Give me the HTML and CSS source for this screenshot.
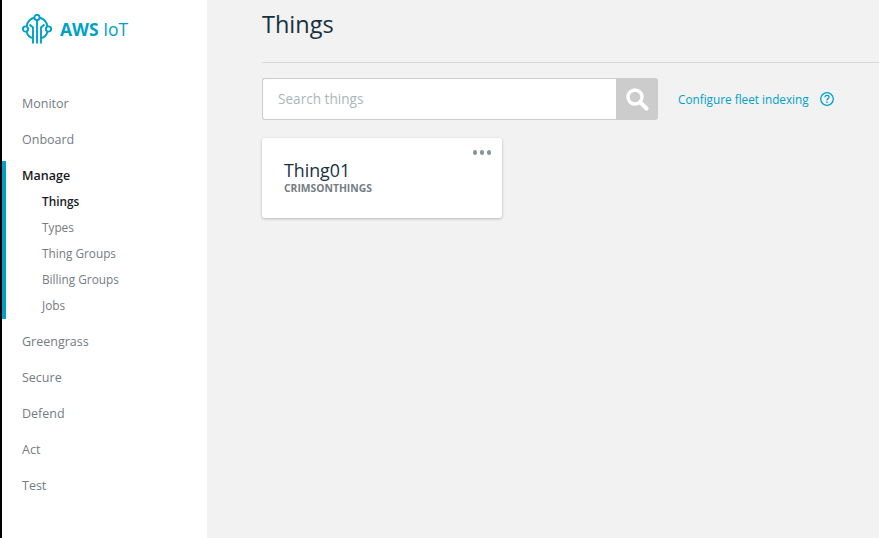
FILE: index.html
```html
<!DOCTYPE html>
<html lang="en">
<head>
  <meta charset="UTF-8" />
  <title>AWS IoT - Things</title>
  <link rel="stylesheet" href="styles.css">
</head>
<body>
  <aside class="sidebar">
    <div class="brand">
      <svg class="brand-icon" viewBox="0 0 30 30" fill="none" stroke="#00a1c9" stroke-width="1.900">
        <circle cx="15" cy="3.500" r="2.600"/>
        <circle cx="3.500" cy="15" r="2.600"/>
        <circle cx="26.500" cy="15" r="2.600"/>
        <path d="M12.500 3.800C8.500 4.500 5.500 7.500 4.500 12.600M17.500 3.800C21.500 4.500 24.500 7.500 25.500 12.600"/>
        <path d="M4.500 17.400C5.500 21.500 8 23.500 11 24M25.500 17.400C24.500 21.500 22 23.500 19 24"/>
        <path d="M15 6V29.500M11 29.500V13.500L7.500 10.500M19 29.500V13.500L22.500 10.500"/>
      </svg>
      <span class="brand-name"><b>AWS</b> IoT</span>
    </div>
    <nav class="nav">
      <a class="nav-item">Monitor</a>
      <a class="nav-item">Onboard</a>
      <div class="nav-group">
        <a class="nav-item active">Manage</a>
        <a class="nav-sub current">Things</a>
        <a class="nav-sub">Types</a>
        <a class="nav-sub">Thing Groups</a>
        <a class="nav-sub">Billing Groups</a>
        <a class="nav-sub">Jobs</a>
      </div>
      <a class="nav-item">Greengrass</a>
      <a class="nav-item">Secure</a>
      <a class="nav-item">Defend</a>
      <a class="nav-item">Act</a>
      <a class="nav-item">Test</a>
    </nav>
  </aside>
  <main class="content">
    <h1 class="title">Things</h1>
    <div class="toolbar">
      <div class="search">
        <input class="search-input" type="text" placeholder="Search things">
        <button class="search-btn">
          <svg viewBox="0 0 24 24" width="24" height="24" fill="none" stroke="#fff">
            <circle cx="10" cy="10" r="7" stroke-width="3.400"/>
            <path d="M15.500 15.500L21.500 21.500" stroke-width="4" stroke-linecap="round"/>
          </svg>
        </button>
      </div>
      <a class="fleet-link">Configure fleet indexing</a>
      <svg class="help" viewBox="0 0 16 16" width="16" height="16" fill="none" stroke="#00a1c9">
        <circle cx="8" cy="8" r="6.300" stroke-width="1.300"/>
        <path d="M6 6.300C6 5 7 4.400 8 4.400S10 5.100 10 6.200C10 7.600 8 7.600 8 9.400" stroke-width="1.300"/>
        <path d="M8 10.600V12" stroke-width="1.400"/>
      </svg>
    </div>
    <div class="card">
      <span class="card-menu"><i></i><i></i><i></i></span>
      <div class="card-name">Thing01</div>
      <div class="card-type">CRIMSONTHINGS</div>
    </div>
  </main>
</body>
</html>
```

FILE: styles.css
```css
* {
  box-sizing: border-box;
}
html, body {
  height: 100%;
}
body {
  margin: 0;
  display: flex;
  height: 538px;
  overflow: hidden;
  font-family: "Open Sans", "Liberation Sans", sans-serif;
  background: #f2f2f2;
  border-left: 2px solid #000;
}
.sidebar {
  width: 205px;
  flex-shrink: 0;
  background: #fff;
}
.brand {
  display: flex;
  align-items: center;
  gap: 8px;
  height: 58px;
  padding-left: 20px;
}
.brand-icon {
  width: 30px;
  height: 30px;
}
.brand-name {
  font-size: 17.500px;
  color: #00a1c9;
}
.brand-name b {
  font-weight: 700;
}
.nav {
  margin-top: 28px;
  display: flex;
  flex-direction: column;
}
.nav-item {
  display: block;
  height: 36px;
  line-height: 36px;
  padding-left: 20px;
  font-size: 12.500px;
  color: #737c84;
}
.nav-item.active {
  color: #16191f;
  font-weight: 600;
  height: 27px;
  line-height: 30px;
}
.nav-group {
  border-left: 4px solid #00a1c9;
  height: 158px;
  margin-bottom: 5px;
  margin-top: 3px;
}
.nav-group .nav-item {
  padding-left: 16px;
}
.nav-sub {
  display: block;
  height: 26px;
  line-height: 26px;
  padding-left: 36px;
  font-size: 11.800px;
  color: #737c84;
}
.nav-sub.current {
  color: #16191f;
  font-weight: 600;
}
.content {
  flex: 1;
  padding-left: 55px;
  min-width: 0;
}
.title {
  margin: 0;
  height: 63px;
  padding-top: 8px;
  font-size: 23.500px;
  line-height: 32px;
  font-weight: 400;
  color: #16313f;
  border-bottom: 1px solid #d5dbdb;
}
.toolbar {
  display: flex;
  align-items: center;
  margin-top: 15px;
}
.search {
  display: flex;
  width: 396px;
  height: 42px;
}
.search-input {
  flex: 1;
  min-width: 0;
  border: 1px solid #ccc;
  border-right: none;
  border-radius: 3px 0 0 3px;
  padding: 0 15px 2px;
  font-family: inherit;
  font-size: 13.600px;
  background: #fff;
}
.search-input::placeholder {
  color: #aab7b8;
}
.search-btn {
  width: 42px;
  border: none;
  padding: 0;
  display: flex;
  align-items: center;
  justify-content: center;
  background: #ccc;
  border-radius: 0 3px 3px 0;
}
.fleet-link {
  margin-left: 20px;
  font-size: 11.750px;
  color: #00a1c9;
}
.help {
  margin-left: 10px;
}
.card {
  position: relative;
  width: 240px;
  height: 80px;
  margin-top: 18px;
  padding: 21px 22px;
  background: #fff;
  border-radius: 3px;
  box-shadow: 0 1px 3px rgba(0, 0, 0, 0.25);
}
.card-menu {
  position: absolute;
  top: 12px;
  right: 11px;
  display: flex;
  gap: 2.500px;
}
.card-menu i {
  width: 4.500px;
  height: 4.500px;
  border-radius: 50%;
  background: #879596;
}
.card-name {
  font-size: 17.800px;
  line-height: 22px;
  color: #16313f;
}
.card-type {
  font-size: 10.350px;
  line-height: 14px;
  font-weight: 700;
  color: #747d84;
}
```
